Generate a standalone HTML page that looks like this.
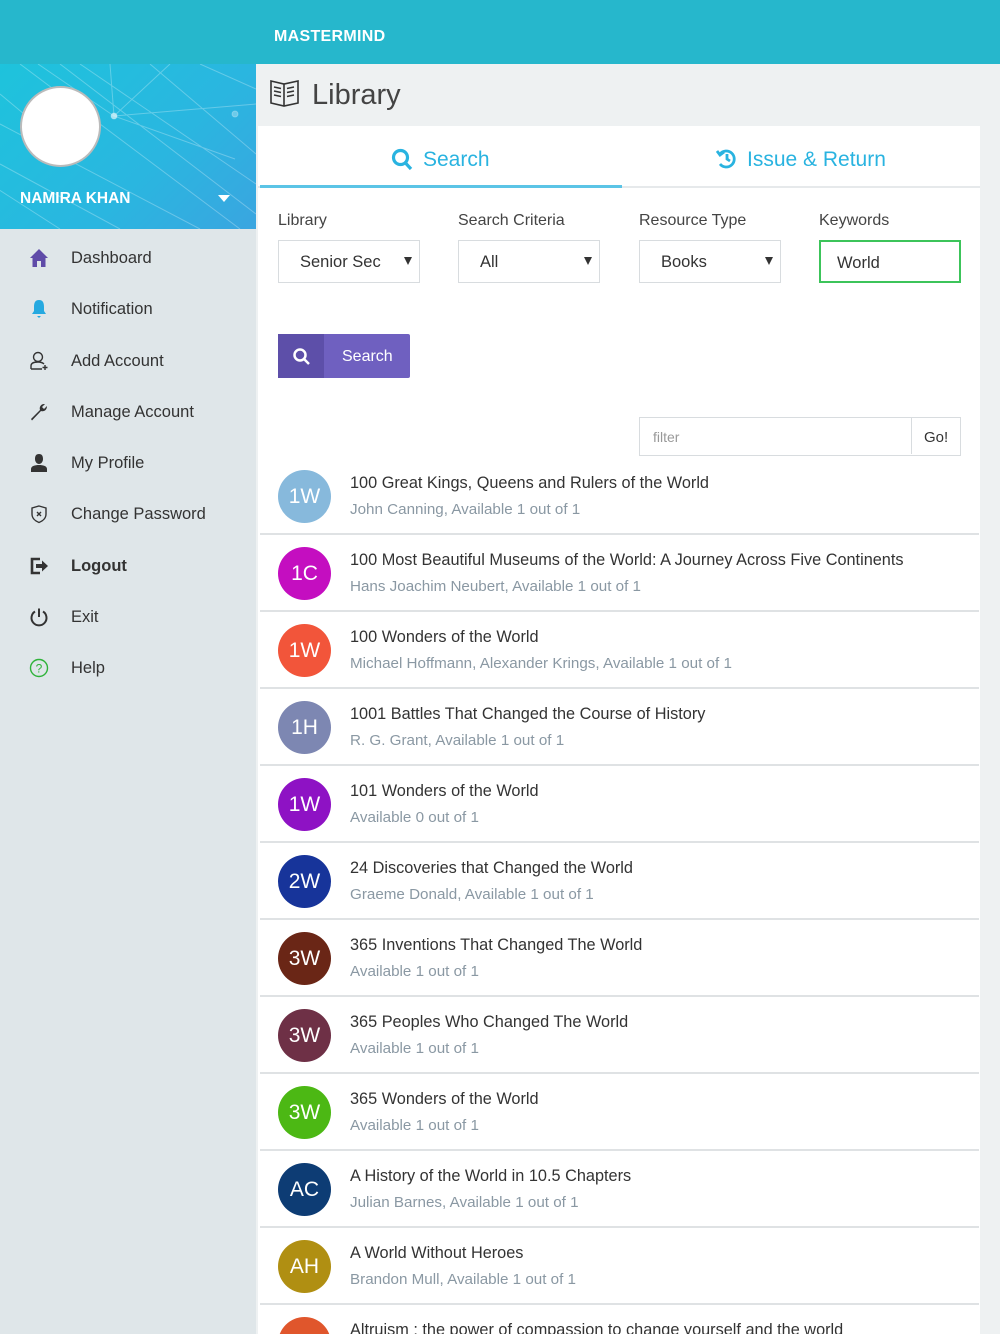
<!DOCTYPE html>
<html><head><meta charset="utf-8"><style>
*{box-sizing:border-box;margin:0;padding:0}
html{width:1000px;height:1334px;overflow:hidden}
body{width:1000px;height:1334px;overflow:hidden;background:#eef1f2;font-family:"Liberation Sans",sans-serif;position:relative}
.top{position:absolute;left:0;top:0;width:1000px;height:64px;background:#26b7cc}
.top span{position:absolute;left:274px;top:28px;color:#fff;font-weight:bold;font-size:16px;letter-spacing:.3px}
.side{position:absolute;left:0;top:64px;width:256px;height:1270px;background:#dfe6e9}
.prof{position:absolute;left:0;top:0;width:256px;height:165px;background:linear-gradient(135deg,#1ec3dc 0%,#2ab6e0 60%,#3aa5e0 100%);overflow:hidden}
.av{position:absolute;left:20px;top:22px;width:81px;height:81px;border-radius:50%;background:#fff;border:2px solid #bbb}
.name{position:absolute;left:20px;top:126px;color:#fff;font-weight:bold;font-size:15.5px}
.caret{position:absolute;left:218px;top:131px;border-left:6px solid transparent;border-right:6px solid transparent;border-top:7px solid #fff}
.menu{position:absolute;left:0;top:168px;width:256px}
.mi{height:51.3px;position:relative;font-size:16.5px;color:#333}
.mi svg{position:absolute;left:29px;top:16px}
.mi span{position:absolute;left:71px;top:17px}
.lib{position:absolute;left:312px;top:79px;font-size:29px;color:#444;font-weight:normal}
.card{position:absolute;left:258px;top:126px;width:722px;height:1208px;background:#fff;overflow:hidden}
.tabs{position:absolute;left:0;top:0;width:722px;height:62px;border-bottom:2px solid #e6e9eb}
.tabl{position:absolute;left:2px;top:59px;width:362px;height:3px;background:#5bc4e6}
.tab{position:absolute;top:22px;font-size:21px;color:#29b3e0}
.lbl{position:absolute;top:86px;font-size:16px;color:#444}
.sel{position:absolute;top:114px;width:142px;height:43px;border:1.5px solid #d8dcdf;font-size:16.5px;color:#333;padding:12px 0 0 21px}
.sel i{position:absolute;right:7px;top:16px;border-left:4px solid transparent;border-right:4px solid transparent;border-top:8px solid #333}
.btn{position:absolute;left:20px;top:208px;width:132px;height:44px;background:#6f60c0;border-radius:2px;color:#fff;font-size:16px}
.btn .ic{position:absolute;left:0;top:0;width:46px;height:44px;background:#5d4fa9}
.filter{position:absolute;left:381px;top:291px;width:322px;height:39px;border:1.5px solid #d8dcdf}
.filter span{position:absolute;left:13px;top:11px;font-size:14px;color:#999}
.filter .go{position:absolute;left:271px;top:0;width:49px;height:36px;border-left:1.5px solid #d8dcdf;color:#333;padding:11px 0 0 12px;font-size:15px}
.row{position:absolute;left:2px;width:719px;height:77px;border-bottom:2px solid #dfe2e4}
.c{position:absolute;left:18px;top:12px;width:53px;height:53px;border-radius:50%;color:#fff;font-size:21px;text-align:center;line-height:53px}
.t{position:absolute;left:90px;top:16px;font-size:16.3px;color:#333;white-space:nowrap}
.s{position:absolute;left:90px;top:43px;font-size:15.2px;color:#8a98a3;white-space:nowrap}
</style></head><body>
<div class="top"><span>MASTERMIND</span></div>
<div class="side">
 <div class="prof">
  <svg width="256" height="165" style="position:absolute;left:0;top:0" stroke="rgba(255,255,255,0.28)" fill="none" stroke-width="1">
   <path d="M0 30 L60 80 M0 60 L200 165 M20 0 L240 165 M60 0 L256 150 M110 0 L114 52 L170 0 M114 52 L38 0 M114 52 L256 40 M200 0 L256 25 M0 100 L120 165 M80 0 L256 120 M114 52 L235 95 M150 0 L256 90 M-10 120 L60 165"/>
   <circle cx="114" cy="52" r="3" fill="rgba(255,255,255,0.6)"/><circle cx="235" cy="50" r="3" fill="rgba(255,255,255,0.3)"/>
  </svg>
  <div class="av"></div>
  <div class="name">NAMIRA KHAN</div><div class="caret"></div>
 </div>
 <div class="menu">
  <div class="mi"><svg width="20" height="20" viewBox="0 0 20 20"><path d="M10 1 L19 10 L16.5 10 L16.5 19 L12 19 L12 13 L8 13 L8 19 L3.5 19 L3.5 10 L1 10 Z" fill="#5f4ba8"/></svg><span>Dashboard</span></div>
  <div class="mi"><svg width="20" height="20" viewBox="0 0 20 20"><path d="M10 1 C6 1 5 4 5 8 L5 12 L3 15 L17 15 L15 12 L15 8 C15 4 14 1 10 1 Z M8 17 L12 17 L10 19 Z" fill="#26a9e0"/></svg><span>Notification</span></div>
  <div class="mi"><svg width="20" height="20" viewBox="0 0 20 20" fill="none" stroke="#333" stroke-width="1.4"><circle cx="9" cy="6" r="4.5"/><path d="M2 18 L2 15 C2 12 5 11 9 11 C12 11 14 12 15 13 M2 18 L13 18 M16 14 L16 19 M13.5 16.5 L18.5 16.5"/></svg><span>Add Account</span></div>
  <div class="mi"><svg width="20" height="20" viewBox="0 0 20 20"><path d="M2 17 L11 8 C10 5 12 2 15 2 L16 2 L13 5 L15 7 L18 4 C18 8 15 10 12 9 L3 18.5 Z" fill="#333"/></svg><span>Manage Account</span></div>
  <div class="mi"><svg width="20" height="20" viewBox="0 0 20 20"><path d="M10 1 C7 1 6 3 6 6 C6 9 8 11 10 11 C12 11 14 9 14 6 C14 3 13 1 10 1 Z M2 19 L2 16 C2 13 6 12 10 12 C14 12 18 13 18 16 L18 19 Z" fill="#333"/></svg><span>My Profile</span></div>
  <div class="mi"><svg width="20" height="20" viewBox="0 0 20 20" fill="none" stroke="#333" stroke-width="1.4"><path d="M10 2 L17 4 L17 10 C17 14 14 17 10 18.5 C6 17 3 14 3 10 L3 4 Z M8 8 L12 12 M12 8 L8 12"/></svg><span>Change Password</span></div>
  <div class="mi"><svg width="20" height="20" viewBox="0 0 20 20"><path d="M11 3 L3 3 L3 17 L11 17" fill="none" stroke="#333" stroke-width="2.6"/><path d="M7 8 L13 8 L13 4.5 L19 10 L13 15.5 L13 12 L7 12 Z" fill="#333"/></svg><span style="font-weight:bold">Logout</span></div>
  <div class="mi"><svg width="20" height="20" viewBox="0 0 20 20" fill="none" stroke="#333" stroke-width="2"><path d="M6 4.5 A7.5 7.5 0 1 0 14 4.5 M10 1.5 L10 10"/></svg><span>Exit</span></div>
  <div class="mi"><svg width="20" height="20" viewBox="0 0 20 20"><circle cx="10" cy="10" r="8.5" fill="none" stroke="#2fb33a" stroke-width="1.4"/><text x="10" y="14.5" font-size="12" text-anchor="middle" fill="#2fb33a" font-family="Liberation Sans">?</text></svg><span>Help</span></div>
 </div>
</div>
<svg style="position:absolute;left:269px;top:77px" width="31" height="31" viewBox="0 0 31 31" fill="none" stroke="#333" stroke-width="1.6"><path d="M2 4 L15 7 L29 4 L29 26 L15 29 L2 26 Z M15 7 L15 29 M5 10 L12 11.5 M5 14 L12 15.5 M5 18 L12 19.5 M18 11.5 L25 10 M18 15.5 L25 14 M18 19.5 L25 18"/></svg>
<div class="lib">Library</div>
<div class="card">
 <div class="tabs"></div><div class="tabl"></div>
 <svg style="position:absolute;left:133px;top:22px" width="23" height="24" viewBox="0 0 23 24" fill="none" stroke="#29b3e0" stroke-width="3.2"><circle cx="9.5" cy="9.5" r="7"/><path d="M14.5 15 L20 21"/></svg>
 <div class="tab" style="left:165px">Search</div>
 <svg style="position:absolute;left:458px;top:22px" width="22" height="22" viewBox="0 0 22 22" fill="none" stroke="#29b3e0" stroke-width="2.8"><path d="M4 6 A8 8 0 1 1 4 16 M1 3 L4 7 L8 4 M11 6 L11 11 L14 13"/></svg>
 <div class="tab" style="left:489px">Issue &amp; Return</div>
 <div class="lbl" style="left:20px">Library</div>
 <div class="lbl" style="left:200px">Search Criteria</div>
 <div class="lbl" style="left:381px">Resource Type</div>
 <div class="lbl" style="left:561px">Keywords</div>
 <div class="sel" style="left:20px">Senior Sec<i></i></div>
 <div class="sel" style="left:200px">All<i></i></div>
 <div class="sel" style="left:381px">Books<i></i></div>
 <div class="sel" style="left:561px;border:2px solid #3cc45a;padding-left:16px">World</div>
 <div class="btn"><div class="ic"><svg style="position:absolute;left:14px;top:13px" width="19" height="19" viewBox="0 0 19 19" fill="none" stroke="#fff" stroke-width="2.5"><circle cx="8" cy="8" r="5.5"/><path d="M12 12 L17 17"/></svg></div><span style="position:absolute;left:64px;top:14px">Search</span></div>
 <div class="filter"><span>filter</span><div class="go">Go!</div></div>
 <div class="row" style="top:332px"><div class="c" style="background:#87b9dc">1W</div><div class="t">100 Great Kings, Queens and Rulers of the World</div><div class="s">John Canning, Available 1 out of 1</div></div>
 <div class="row" style="top:409px"><div class="c" style="background:#c40ec0">1C</div><div class="t">100 Most Beautiful Museums of the World: A Journey Across Five Continents</div><div class="s">Hans Joachim Neubert, Available 1 out of 1</div></div>
 <div class="row" style="top:486px"><div class="c" style="background:#f2553a">1W</div><div class="t">100 Wonders of the World</div><div class="s">Michael Hoffmann, Alexander Krings, Available 1 out of 1</div></div>
 <div class="row" style="top:563px"><div class="c" style="background:#7d87b2">1H</div><div class="t">1001 Battles That Changed the Course of History</div><div class="s">R. G. Grant, Available 1 out of 1</div></div>
 <div class="row" style="top:640px"><div class="c" style="background:#8e12c4">1W</div><div class="t">101 Wonders of the World</div><div class="s">Available 0 out of 1</div></div>
 <div class="row" style="top:717px"><div class="c" style="background:#17349a">2W</div><div class="t">24 Discoveries that Changed the World</div><div class="s">Graeme Donald, Available 1 out of 1</div></div>
 <div class="row" style="top:794px"><div class="c" style="background:#6a2616">3W</div><div class="t">365 Inventions That Changed The World</div><div class="s">Available 1 out of 1</div></div>
 <div class="row" style="top:871px"><div class="c" style="background:#6e3046">3W</div><div class="t">365 Peoples Who Changed The World</div><div class="s">Available 1 out of 1</div></div>
 <div class="row" style="top:948px"><div class="c" style="background:#4cb814">3W</div><div class="t">365 Wonders of the World</div><div class="s">Available 1 out of 1</div></div>
 <div class="row" style="top:1025px"><div class="c" style="background:#0d3c74">AC</div><div class="t">A History of the World in 10.5 Chapters</div><div class="s">Julian Barnes, Available 1 out of 1</div></div>
 <div class="row" style="top:1102px"><div class="c" style="background:#b08f12">AH</div><div class="t">A World Without Heroes</div><div class="s">Brandon Mull, Available 1 out of 1</div></div>
 <div class="row" style="top:1179px;border:none"><div class="c" style="background:#e0562c">AA</div><div class="t">Altruism : the power of compassion to change yourself and the world</div></div>
</div>
</body></html>
